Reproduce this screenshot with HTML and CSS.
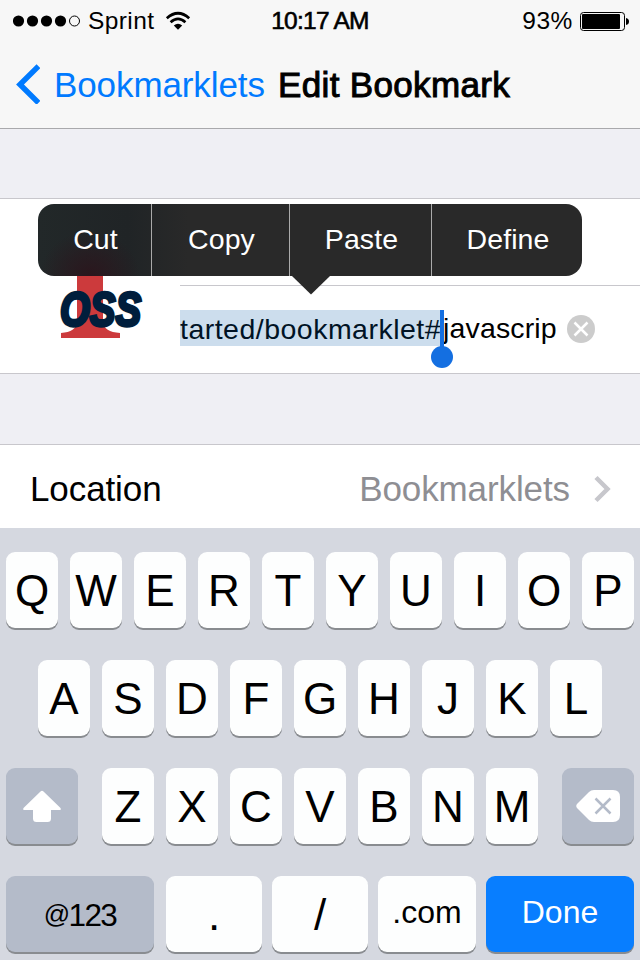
FILE: index.html
```html
<!DOCTYPE html>
<html lang="en">
<head>
<meta charset="utf-8">
<title>Edit Bookmark</title>
<link rel="stylesheet" href="styles.css">
</head>
<body>
<header class="header">
  <div class="status">
    <div class="carrier">
      <svg class="signal" width="68" height="12" viewBox="0 0 68 12"><g><circle cx="5.500" cy="6" r="5.6"/><circle cx="19.500" cy="6" r="5.6"/><circle cx="33.500" cy="6" r="5.6"/><circle cx="47.500" cy="6" r="5.6"/></g><circle cx="61.500" cy="6" r="5" fill="none" stroke="#000" stroke-width="1"/></svg>
      <span>Sprint</span>
      <svg class="wifi" width="26" height="20" viewBox="0 0 26 20"><g fill="none" stroke="#000" stroke-width="2.7"><path d="M1.8 7.3Q13-2.8 24.2 7.3"/><path d="M5.6 11.3Q13 4.6 20.4 11.3"/></g><path d="M8.8 14.5Q13 11 17.2 14.5L13 18.8Z"/></svg>
    </div>
    <div class="time">10:17 AM</div>
    <div class="power">
      <span>93%</span>
      <svg width="50" height="20" viewBox="0 0 50 20"><rect x=".5" y="1.500" width="44" height="18" rx="3" fill="none" stroke="#000"/><rect x="2" y="3" width="38" height="15" rx="1"/><path d="M46 7Q49 7.500 49 10.500T46 14Z"/></svg>
    </div>
  </div>
  <nav class="nav">
    <svg width="25" height="40" viewBox="0 0 25 40"><path d="M23.500 2.200L5 20.500L23.500 38.800" fill="none" stroke="#007aff" stroke-width="5.500"/></svg>
    <span class="back">Bookmarklets</span>
    <h1 class="title">Edit Bookmark</h1>
  </nav>
</header>
<main>
  <section class="card">
    <div class="logo">
      <svg width="100" height="86" viewBox="0 0 100 86"><path d="M22 0H48V61Q49 71 65 72V77H6V72Q21 71 22 61Z" fill="#cc3a3c"/><text class="oss" x="5" y="64.500" textLength="81" lengthAdjust="spacingAndGlyphs">OSS</text></svg>
    </div>
    <div class="fields">
      <div class="name-field"></div>
      <div class="url-field">
        <span class="selected">tarted/bookmarklet#<i class="handle"></i></span><span class="rest">javascrip</span>
        <svg class="clear" width="28" height="28" viewBox="0 0 28 28"><circle cx="14" cy="14" r="14" fill="#ccc"/><path d="M7.500 7.500L20.500 20.500M20.500 7.500L7.500 20.500" stroke="#fff" stroke-width="2.500"/></svg>
      </div>
    </div>
    <div class="menu">
      <span>Cut</span><span>Copy</span><span>Paste</span><span>Define</span>
      <svg class="arrow" width="38" height="19" viewBox="0 0 38 19"><path d="M0 0H38L19 18.500Z" fill="#292929"/></svg>
    </div>
  </section>
  <section class="location">
    <span>Location</span>
    <span class="value">Bookmarklets</span>
    <svg width="18" height="28" viewBox="0 0 18 28"><path d="M2 2.500L13.500 14L2 25.500" fill="none" stroke="#c7c7cc" stroke-width="4.500"/></svg>
  </section>
</main>
<footer class="keyboard">
  <div class="row"><b>Q</b><b>W</b><b>E</b><b>R</b><b>T</b><b>Y</b><b>U</b><b>I</b><b>O</b><b>P</b></div>
  <div class="row"><b>A</b><b>S</b><b>D</b><b>F</b><b>G</b><b>H</b><b>J</b><b>K</b><b>L</b></div>
  <div class="row">
    <b class="gray shift"><svg width="40" height="34" viewBox="0 0 40 34"><path d="M18.500 1.500Q20 .2 21.500 1.500L38.500 18Q39.500 20 37.500 20H29V28.500Q29 32 25.500 32H14.500Q11 32 11 28.500V20H2.500Q.5 20 1.500 18Z" fill="#fff"/></svg></b>
    <b>Z</b><b>X</b><b>C</b><b>V</b><b>B</b><b>N</b><b>M</b>
    <b class="gray delete"><svg width="44" height="32" viewBox="0 0 44 32"><path d="M13 2Q15 0 18 0H37Q44 0 44 7V25Q44 32 37 32H18Q15 32 13 30L1 18Q-.5 16 1 14Z" fill="#fff"/><path d="M19.500 8.500L34.500 23.500M34.500 8.500L19.500 23.500" stroke="#b4bbc9" stroke-width="2.500"/></svg></b>
  </div>
  <div class="row bottom">
    <b class="gray symbols"><small>@</small>123</b><b class="dot">.</b><b class="slash">/</b><b class="com">.com</b><b class="done">Done</b>
  </div>
</footer>
</body>
</html>
```
FILE: styles.css
```css
* { box-sizing: border-box; }
body {
  margin: 0;
  width: 640px;
  height: 960px;
  overflow: hidden;
  background: #efeff4;
  color: #000;
  font-family: "Liberation Sans", Arial, sans-serif;
  white-space: nowrap;
}
svg { display: block; flex: none; }
.header {
  height: 129px;
  background: #f7f7f7;
  border-bottom: 1px solid #a9a9ac;
}
.status {
  display: grid;
  grid-template-columns: 1fr auto 1fr;
  height: 40px;
  font-size: 24.5px;
  line-height: 41px;
}
.carrier, .power { display: flex; align-items: center; }
.carrier { padding-left: 13px; }
.carrier span { margin-left: 7px; letter-spacing: 0.4px; }
.wifi { margin-left: 11px; }
.time { letter-spacing: -0.75px; -webkit-text-stroke: 0.6px #000; }
.power { justify-content: flex-end; padding-right: 10px; gap: 7px; }
.power span { letter-spacing: 0.6px; }
.nav {
  display: flex;
  align-items: center;
  height: 88px;
  padding-left: 15px;
  font-size: 35px;
  line-height: 88px;
}
.back { margin-left: 14px; width: 224px; color: #007aff; letter-spacing: -0.1px; line-height: 89px; }
.title {
  margin: 0;
  font-size: 35px;
  font-weight: normal;
  line-height: 89px;
  letter-spacing: 0.35px;
  -webkit-text-stroke: 1px #000;
}
.card {
  position: relative;
  display: flex;
  height: 176px;
  margin-top: 69px;
  background: #fff;
  border-top: 1px solid #c8c7cc;
  border-bottom: 1px solid #c8c7cc;
}
.logo { width: 180px; padding: 62px 0 0 55px; }
.logo svg { overflow: visible; }
.oss {
  font: italic bold 48px "Liberation Sans", Arial, sans-serif;
  fill: #001e3c;
  stroke: #001e3c;
  stroke-width: 3.4px;
}
.fields { flex: 1; }
.name-field { height: 87px; border-bottom: 1px solid #c8c7cc; }
.url-field {
  display: flex;
  align-items: center;
  height: 84px;
  font-size: 28.5px;
  line-height: 36px;
}
.selected {
  position: relative;
  width: 262px;
  height: 36px;
  background: #ccdded;
  color: #001325;
  letter-spacing: 0.48px;
  line-height: 38px;
}
.handle {
  position: absolute;
  right: -2px;
  top: 0;
  width: 4px;
  height: 40px;
  background: #146fe1;
}
.handle::after {
  content: "";
  position: absolute;
  left: -9px;
  top: 36px;
  width: 22px;
  height: 22px;
  border-radius: 50%;
  background: #146fe1;
}
.rest { width: 125px; padding-left: 1px; letter-spacing: 0.15px; line-height: 38px; }
.clear { margin-top: 2px; }
.menu {
  position: absolute;
  left: 38px;
  top: 5px;
  display: grid;
  grid-template-columns: 114px 138px 142px 150px;
  width: 544px;
  height: 72px;
  border-radius: 16px;
  background: radial-gradient(ellipse 50px 45px at 52px 72px, #2b161d, transparent), linear-gradient(90deg, #222829, #202426 90px, #292929 150px);
  color: #fff;
  font-size: 28.5px;
  line-height: 71px;
  letter-spacing: 0.1px;
  text-align: center;
}
.menu span { padding-left: 2px; }
.menu span:not(:nth-child(4)) { border-right: 1px solid #aaa; }
.arrow { position: absolute; left: 254px; top: 72px; }
.location {
  display: flex;
  align-items: center;
  height: 84px;
  margin-top: 70px;
  padding: 4px 28px 0 30px;
  border-top: 1px solid #c8c7cc;
  background: #fff;
  font-size: 35px;
  letter-spacing: -0.1px;
}
.value { margin-left: auto; margin-right: 24px; color: #8e8e93; }
.keyboard {
  display: flex;
  flex-direction: column;
  gap: 32px;
  height: 432px;
  padding-top: 24px;
  background: #d5d8e0;
}
.row { display: flex; justify-content: center; gap: 12px; }
.row b {
  flex: none;
  width: 52px;
  height: 76px;
  border-radius: 9px;
  background: #fdfefe;
  box-shadow: 0 2px 0 #898c90;
  font-size: 44px;
  font-weight: normal;
  line-height: 78px;
  text-align: center;
}
.row .gray { display: flex; justify-content: center; background: #b4bbc9; }
.row .shift { width: 72px; margin-right: 12px; padding-top: 22px; }
.row .delete { width: 72px; margin-left: 12px; padding-top: 22px; }
.row.bottom { gap: 10px; }
.row .symbols { width: 148px; margin-right: 2px; font-size: 31.5px; line-height: 79px; letter-spacing: -1.6px; }
.symbols small { font-size: 26px; line-height: 76px; }
.row .dot { width: 96px; line-height: 78px; }
.row .slash { width: 96px; line-height: 77px; }
.row .com { width: 98px; font-size: 32px; line-height: 73px; }
.row .done { width: 148px; background: #087eff; color: #fff; font-size: 32px; line-height: 73px; }
```
